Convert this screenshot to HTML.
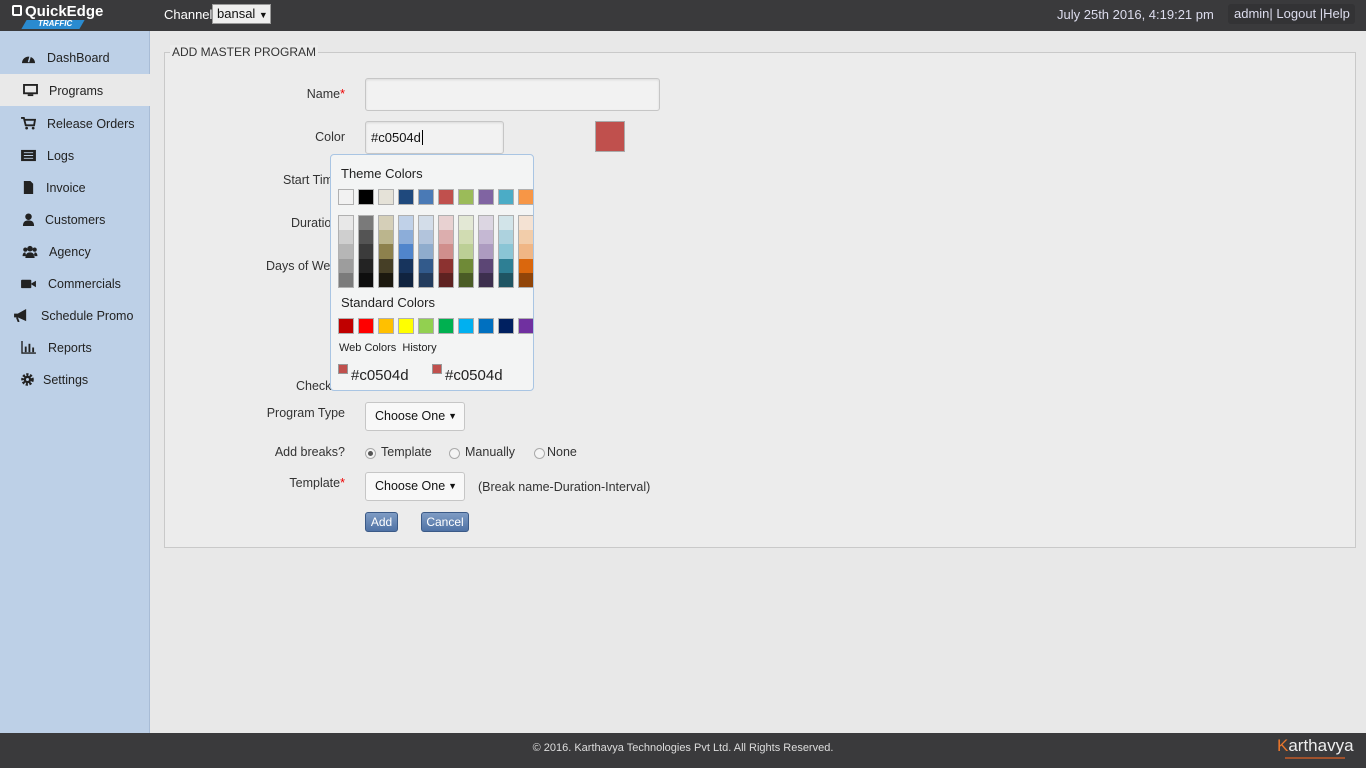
<!DOCTYPE html>
<html><head><meta charset="utf-8"><style>
*{margin:0;padding:0;box-sizing:border-box}
body{width:1366px;height:768px;position:relative;overflow:hidden;background:#e8e8e8;font-family:"Liberation Sans",sans-serif;font-size:12.5px;color:#333}
.a{position:absolute}
#top{left:0;top:0;width:1366px;height:31px;background:#3a3a3c;color:#fff}
#side{left:0;top:31px;width:150px;height:702px;background:#bdd0e7;border-right:1px solid #a8bcd6}
.it{position:absolute;left:0;width:150px;height:32px;font-size:12.5px;color:#222;line-height:34px}
.it .ic{position:absolute;left:21px;top:10px;width:15px;height:13px}
.it span{position:absolute;left:47px}
#foot{left:0;top:733px;width:1366px;height:35px;background:#3a3a3c;color:#ddd;font-size:11px;text-align:center;line-height:30px}
.fs{left:164px;top:52px;width:1192px;height:496px;border:1px solid #c9c9c9;background:#ececec}
.lbl{text-align:right;width:180px;left:165px;font-size:12.5px;color:#333}
.cl{font-size:12.5px;color:#333;white-space:nowrap}
.inp{background:#f2f2f2;border:1px solid #c6c6c6;border-radius:3px;box-shadow:inset 0 1px 2px rgba(0,0,0,.1)}
.sel{background:#f8f8f8;border:1px solid #c6c6c6;border-radius:3px;font-size:12.5px;color:#111;padding:0 0 0 9px;line-height:26px}
.sel b{position:absolute;right:7px;top:0;font-size:9px}
.btn{background:linear-gradient(#7f9cc4,#4f72a5);border:1px solid #3b5a87;border-radius:3px;color:#fff;font-size:12px;text-align:center;line-height:18px;height:20px}
.sw{position:absolute;width:16px;height:16px;border:1px solid #b0b0b0}
.col{position:absolute;width:16px;height:73px;border:1px solid #b0b0b0;top:215px}
.col i{display:block;height:14.2px}
.rad{width:11px;height:11px;border-radius:50%;border:1px solid #aaa;background:#f4f4f4}
</style></head><body>
<div class="a" id="top">
 <div class="a" style="left:12px;top:5px;width:10px;height:11px;border:2px solid #fff;border-radius:2px"></div>
 <div class="a" style="left:25px;top:3px;color:#fff;font-weight:bold;font-size:15px">QuickEdge</div>
 <div class="a" style="left:24px;top:20px;width:58px;height:9px;background:#2a8bd0;transform:skewX(-30deg)"></div>
 <div class="a" style="left:38px;top:19px;color:#fff;font-size:8px;font-weight:bold;font-style:italic">TRAFFIC</div>
 <div class="a" style="left:164px;top:7px;font-size:13px">Channel</div>
 <div class="a" style="left:212px;top:4px;width:59px;height:20px;background:#eee;border:1px solid #999;color:#111;font-size:13px;padding-left:4px;line-height:18px">bansal <span style="font-size:9px">▼</span></div>
 <div class="a" style="left:1057px;top:7px;font-size:13px;color:#dde">July 25th 2016, 4:19:21 pm</div>
 <div class="a" style="left:1228px;top:4px;width:127px;height:20px;background:#333335;border-radius:3px;font-size:13px;color:#dde;line-height:20px;padding-left:6px">admin| Logout |Help</div>
</div>
<div class="a" id="side">
 <div class="it" style="top:10px"><svg class="ic" viewBox="0 0 16 14"><path d="M1 13A7 7 0 1 1 15 13Z" fill="#222"/><path d="M8 12L10 5" stroke="#bdd0e7" stroke-width="1.6"/></svg><span>DashBoard</span></div>
 <div class="it" style="top:43px;background:#e9e9e9;height:32px"><svg class="ic" viewBox="0 0 16 14" style="left:22px;width:17px"><rect x="1" y="1" width="14" height="9" fill="none" stroke="#222" stroke-width="2"/><rect x="5" y="11" width="6" height="2" fill="#222"/></svg><span style="left:49px">Programs</span></div>
 <div class="it" style="top:76px"><svg class="ic" viewBox="0 0 16 14"><path d="M0 1H3L5 9H14L15 3H4" fill="none" stroke="#222" stroke-width="2"/><circle cx="6" cy="12" r="1.5" fill="#222"/><circle cx="13" cy="12" r="1.5" fill="#222"/></svg><span>Release Orders</span></div>
 <div class="it" style="top:108px"><svg class="ic" viewBox="0 0 16 14"><rect x="0" y="1" width="16" height="12" fill="#222"/><path d="M3 4H13M3 7H13M3 10H13" stroke="#bdd0e7"/></svg><span>Logs</span></div>
 <div class="it" style="top:140px"><svg class="ic" viewBox="0 0 16 14"><path d="M3 0H10L13 3V14H3Z" fill="#222"/></svg><span style="left:46px">Invoice</span></div>
 <div class="it" style="top:172px"><svg class="ic" viewBox="0 0 16 14"><circle cx="8" cy="4" r="3.5" fill="#222"/><path d="M2 14Q2 8 8 8Q14 8 14 14Z" fill="#222"/></svg><span style="left:45px">Customers</span></div>
 <div class="it" style="top:204px"><svg class="ic" viewBox="0 0 16 14" style="width:18px"><circle cx="8" cy="4" r="3" fill="#222"/><circle cx="3" cy="5" r="2.3" fill="#222"/><circle cx="13" cy="5" r="2.3" fill="#222"/><path d="M3 14Q3 8 8 8Q13 8 13 14ZM0 12Q0 8 3 8L4 12ZM16 12Q16 8 13 8L12 12Z" fill="#222"/></svg><span style="left:49px">Agency</span></div>
 <div class="it" style="top:236px"><svg class="ic" viewBox="0 0 16 14"><rect x="0" y="3" width="11" height="9" rx="1" fill="#222"/><path d="M11 7L16 4V11L11 8Z" fill="#222"/></svg><span style="left:48px">Commercials</span></div>
 <div class="it" style="top:268px"><svg class="ic" viewBox="0 0 16 14" style="left:14px"><path d="M0 5H4L13 0V13L4 9H0Z" fill="#222"/><path d="M3 9L5 14" stroke="#222" stroke-width="2"/></svg><span style="left:41px">Schedule Promo</span></div>
 <div class="it" style="top:300px"><svg class="ic" viewBox="0 0 16 14"><path d="M1 0V13H16" fill="none" stroke="#222" stroke-width="1.5"/><rect x="4" y="6" width="2" height="6" fill="#222"/><rect x="8" y="3" width="2" height="9" fill="#222"/><rect x="12" y="7" width="2" height="5" fill="#222"/></svg><span style="left:48px">Reports</span></div>
 <div class="it" style="top:332px"><svg class="ic" viewBox="0 0 16 14" style="left:20px"><circle cx="8" cy="7" r="5" fill="none" stroke="#222" stroke-width="3.5" stroke-dasharray="2.2 1.5"/><circle cx="8" cy="7" r="4" fill="#222"/><circle cx="8" cy="7" r="1.6" fill="#bdd0e7"/></svg><span style="left:43px">Settings</span></div>
</div>
<div class="a fs"></div>
<div class="a" style="left:170px;top:45px;background:#ececec;padding:0 2px;font-size:12px;color:#333">ADD MASTER PROGRAM</div>
<div class="a lbl" style="top:87px">Name<span style="color:#e00">*</span></div>
<div class="a inp" style="left:365px;top:78px;width:295px;height:33px"></div>
<div class="a lbl" style="top:130px">Color</div>
<div class="a inp" style="left:365px;top:121px;width:139px;height:33px;font-size:13px;color:#111;padding:8px 0 0 5px">#c0504d<span style="border-left:1px solid #000;margin-left:1px"></span></div>
<div class="a" style="left:595px;top:121px;width:30px;height:31px;background:#c0504d;border:1px solid #aaa"></div>
<div class="a cl" style="top:173px;left:283px">Start Time</div>
<div class="a cl" style="top:216px;left:291px">Duration</div>
<div class="a cl" style="top:259px;left:266px">Days of Week</div>
<div class="a cl" style="top:379px;left:296px">Check</div>
<div class="a lbl" style="top:406px">Program Type</div>
<div class="a sel" style="left:365px;top:402px;width:100px;height:29px;line-height:27px">Choose One<b>▼</b></div>
<div class="a lbl" style="top:445px">Add breaks?</div>
<div class="a rad" style="left:365px;top:448px"><div style="width:5px;height:5px;border-radius:50%;background:#555;margin:2px"></div></div>
<div class="a" style="left:381px;top:445px">Template</div>
<div class="a rad" style="left:449px;top:448px"></div>
<div class="a" style="left:465px;top:445px">Manually</div>
<div class="a rad" style="left:534px;top:448px"></div>
<div class="a" style="left:547px;top:445px">None</div>
<div class="a lbl" style="top:476px">Template<span style="color:#e00">*</span></div>
<div class="a sel" style="left:365px;top:472px;width:100px;height:29px;line-height:27px">Choose One<b>▼</b></div>
<div class="a" style="left:478px;top:480px">(Break name-Duration-Interval)</div>
<div class="a btn" style="left:365px;top:512px;width:33px">Add</div>
<div class="a btn" style="left:421px;top:512px;width:48px">Cancel</div>

<div class="a" style="left:330px;top:154px;width:204px;height:237px;background:#f3f4f4;border:1px solid #a9c5e3;border-radius:4px;overflow:hidden">
<div style="position:absolute;left:-331px;top:-155px;width:1366px;height:768px">
 <div class="a" style="left:341px;top:166px;font-size:13px;color:#222">Theme Colors</div>
 <div class="sw" style="left:338px;top:189px;background:#f2f2f2"></div>
 <div class="sw" style="left:358px;top:189px;background:#000"></div>
 <div class="sw" style="left:378px;top:189px;background:#e5e2d8"></div>
 <div class="sw" style="left:398px;top:189px;background:#1f497d"></div>
 <div class="sw" style="left:418px;top:189px;background:#4a7ab6"></div>
 <div class="sw" style="left:438px;top:189px;background:#c0504d"></div>
 <div class="sw" style="left:458px;top:189px;background:#9bbb59"></div>
 <div class="sw" style="left:478px;top:189px;background:#8064a2"></div>
 <div class="sw" style="left:498px;top:189px;background:#4bacc6"></div>
 <div class="sw" style="left:518px;top:189px;background:#f79646"></div>
 <div class="col" style="left:338px"><i style="background:#e8e8e8"></i><i style="background:#cfcfcf"></i><i style="background:#b6b6b6"></i><i style="background:#9d9d9d"></i><i style="background:#7b7b7b"></i></div>
 <div class="col" style="left:358px"><i style="background:#7a7a7a"></i><i style="background:#545454"></i><i style="background:#3b3b3b"></i><i style="background:#232323"></i><i style="background:#0e0e0e"></i></div>
 <div class="col" style="left:378px"><i style="background:#d5cfb8"></i><i style="background:#bbb58d"></i><i style="background:#8d814d"></i><i style="background:#463f26"></i><i style="background:#1c190f"></i></div>
 <div class="col" style="left:398px"><i style="background:#c0d1e8"></i><i style="background:#8cadd9"></i><i style="background:#5085cc"></i><i style="background:#17345d"></i><i style="background:#10233f"></i></div>
 <div class="col" style="left:418px"><i style="background:#d3dde9"></i><i style="background:#b2c4dc"></i><i style="background:#8faccd"></i><i style="background:#325a8b"></i><i style="background:#233c5d"></i></div>
 <div class="col" style="left:438px"><i style="background:#e8d1d1"></i><i style="background:#dcaeae"></i><i style="background:#d08e8c"></i><i style="background:#8c3230"></i><i style="background:#5e2221"></i></div>
 <div class="col" style="left:458px"><i style="background:#e3e8d5"></i><i style="background:#d1dcb2"></i><i style="background:#bccf95"></i><i style="background:#6f8a37"></i><i style="background:#4a5c25"></i></div>
 <div class="col" style="left:478px"><i style="background:#dcd6e2"></i><i style="background:#c5b8d3"></i><i style="background:#ad9bc0"></i><i style="background:#5c4675"></i><i style="background:#3d2f4e"></i></div>
 <div class="col" style="left:498px"><i style="background:#d2e4e9"></i><i style="background:#add2de"></i><i style="background:#8ac5d5"></i><i style="background:#2e7f94"></i><i style="background:#1f5563"></i></div>
 <div class="col" style="left:518px"><i style="background:#f4e2d3"></i><i style="background:#f2cdaa"></i><i style="background:#f0b685"></i><i style="background:#da670d"></i><i style="background:#914509"></i></div>
 <div class="a" style="left:341px;top:295px;font-size:13px;color:#222">Standard Colors</div>
 <div class="sw" style="left:338px;top:318px;background:#c00000"></div>
 <div class="sw" style="left:358px;top:318px;background:#ff0000"></div>
 <div class="sw" style="left:378px;top:318px;background:#ffc000"></div>
 <div class="sw" style="left:398px;top:318px;background:#ffff00"></div>
 <div class="sw" style="left:418px;top:318px;background:#92d050"></div>
 <div class="sw" style="left:438px;top:318px;background:#00b050"></div>
 <div class="sw" style="left:458px;top:318px;background:#00b0f0"></div>
 <div class="sw" style="left:478px;top:318px;background:#0070c0"></div>
 <div class="sw" style="left:498px;top:318px;background:#002060"></div>
 <div class="sw" style="left:518px;top:318px;background:#7030a0"></div>
 <div class="a" style="left:339px;top:342px;font-size:11px;color:#222">Web Colors&nbsp;&nbsp;History</div>
 <div class="a" style="left:338px;top:364px;width:10px;height:10px;background:#c0504d;border:1px solid #999"></div>
 <div class="a" style="left:351px;top:367px;font-size:15px;color:#222">#c0504d</div>
 <div class="a" style="left:432px;top:364px;width:10px;height:10px;background:#c0504d;border:1px solid #999"></div>
 <div class="a" style="left:445px;top:367px;font-size:15px;color:#222">#c0504d</div>
</div></div>

<div class="a" id="foot">© 2016. Karthavya Technologies Pvt Ltd. All Rights Reserved.
 <div class="a" style="left:1277px;top:3px;font-size:17px;color:#eee;line-height:20px"><span style="color:#e8762c">K</span>arthavya</div>
 <div class="a" style="left:1285px;top:24px;width:60px;height:2px;background:#a0522d"></div>
</div>
</body></html>
